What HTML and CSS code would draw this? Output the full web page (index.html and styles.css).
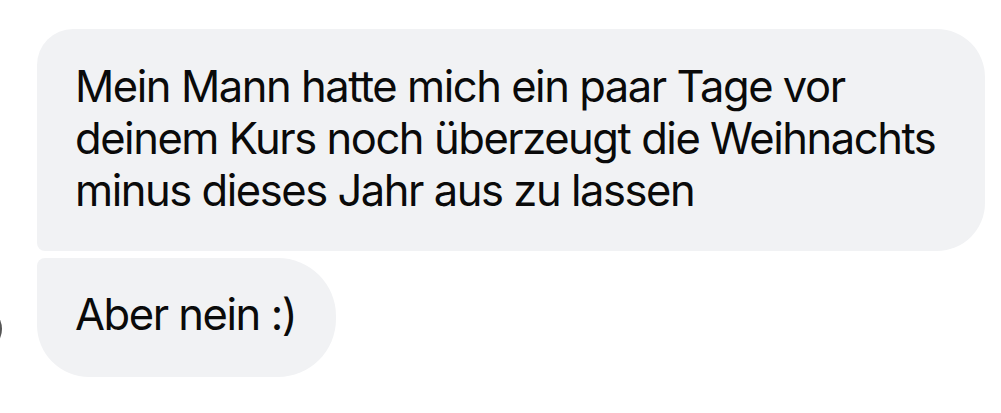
FILE: index.html
```html
<!doctype html>
<html lang="de">
  <head>
    <meta charset="UTF-8" />
    <meta name="viewport" content="width=device-width, initial-scale=1.0" />
    <title>Chat</title>
    <link rel="stylesheet" href="styles.css">
  </head>
  <body>
    <main class="thread">
      <div class="bubble first">
        Mein Mann hatte mich ein paar Tage vor<br />
        deinem Kurs noch überzeugt die Weihnachts<br />
        minus dieses Jahr aus zu lassen
      </div>
      <div class="row">
        <span class="avatar"></span>
        <div class="bubble last">Aber nein :)</div>
      </div>
    </main>
  </body>
</html>
```

FILE: styles.css
```css
* {
  margin: 0;
  padding: 0;
  box-sizing: border-box;
}
:root {
  --bubble-background: #f1f2f4;
  --font-color: #0a0a0a;
}
body {
  background-color: #fff;
  color: var(--font-color);
  font-family: Inter, "Noto Sans", "Liberation Sans", sans-serif;
  width: 1001px;
  height: 413px;
  overflow: hidden;
}
.thread {
  display: flex;
  flex-direction: column;
  align-items: flex-start;
  gap: 7px;
  padding: 29px 0 0 37px;
}
.bubble {
  background-color: var(--bubble-background);
  font-size: 43.5px;
  line-height: 52px;
  letter-spacing: -1.45px;
  white-space: nowrap;
}
.bubble.first {
  width: 948px;
  padding: 31px 38px 35px;
  border-radius: 36px 48px 48px 8px;
}
.row {
  display: flex;
  align-items: center;
}
.avatar {
  width: 44px;
  height: 44px;
  margin-left: -79px;
  margin-right: 35px;
  margin-top: 22px;
  border-radius: 50%;
  background-color: #555;
}
.bubble.last {
  padding: 30px 40px 37px 38px;
  border-radius: 8px 58px 58px 52px;
}
```
